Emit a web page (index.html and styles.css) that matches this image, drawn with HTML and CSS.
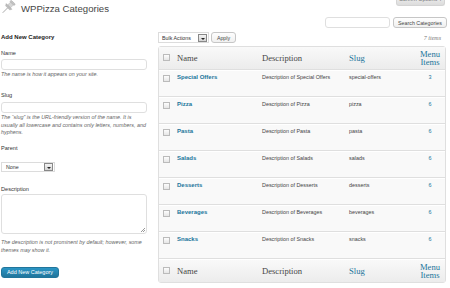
FILE: index.html
```html
<!DOCTYPE html>
<html>
	<head>
		<meta charset="utf-8">
		<title>WPPizza Categories</title>
		<link rel="stylesheet" href="styles.css">
	</head>
	<body>
		<div class="wrap">
			<div class="head">
				<div class="title">
					<svg class="pin" width="16" height="15" viewBox="0 0 16 15">
						<g transform="rotate(45 8 7.5)">
							<rect x="5" y="0" width="6" height="2" rx="1" fill="#c4c4c4" stroke="#aaa" stroke-width="0.5"/>
							<rect x="6" y="2" width="4" height="4" fill="#d6d6d6" stroke="#b0b0b0" stroke-width="0.5"/>
							<path d="M4 6h8l-1.2 2h-5.6z" fill="#bdbdbd" stroke="#a5a5a5" stroke-width="0.5"/>
							<line x1="8" y1="8" x2="8" y2="15" stroke="#9a9a9a" stroke-width="0.8"/>
						</g>
					</svg>
					<h2>WPPizza Categories</h2>
				</div>
				<a class="screen-opt">Screen Options ▾</a>
			</div>

			<div class="search-box">
				<input type="text" class="search-input">
				<button class="btn">Search Categories</button>
			</div>

			<div class="cols">
				<div class="col-left">
					<h3>Add New Category</h3>

					<div class="field f-name">
						<label>Name</label>
						<input type="text" class="txt">
						<p class="help">The name is how it appears on your site.</p>
					</div>

					<div class="field f-slug">
						<label>Slug</label>
						<input type="text" class="txt">
						<p class="help">The “slug” is the URL-friendly version of the name. It is usually all lowercase and contains only letters, numbers, and hyphens.</p>
					</div>

					<div class="field f-parent">
						<label>Parent</label>
						<div class="select parent-sel"><span>None</span><i class="arrow"></i></div>
					</div>

					<div class="field f-desc">
						<label>Description</label>
						<div class="textarea"><i class="grip"></i></div>
						<p class="help">The description is not prominent by default; however, some themes may show it.</p>
					</div>

					<button class="btn-primary">Add New Category</button>
				</div>

				<div class="col-right">
					<div class="tablenav">
						<div class="select bulk"><span>Bulk Actions</span><i class="arrow"></i></div>
						<button class="btn">Apply</button>
						<span class="num">7 items</span>
					</div>

					<table class="list">
						<colgroup>
							<col class="c-cb"><col class="c-name"><col class="c-desc"><col class="c-slug"><col class="c-count">
						</colgroup>
						<thead>
							<tr>
								<th><input type="checkbox" class="cb"></th>
								<th class="h-dark">Name</th>
								<th class="h-dark">Description</th>
								<th class="h-link">Slug</th>
								<th class="h-link num-col">Menu Items</th>
							</tr>
						</thead>
						<tbody>
							<tr><td><input type="checkbox" class="cb"></td><td class="name">Special Offers</td><td>Description of Special Offers</td><td>special-offers</td><td class="count">3</td></tr>
							<tr><td><input type="checkbox" class="cb"></td><td class="name">Pizza</td><td>Description of Pizza</td><td>pizza</td><td class="count">6</td></tr>
							<tr><td><input type="checkbox" class="cb"></td><td class="name">Pasta</td><td>Description of Pasta</td><td>pasta</td><td class="count">6</td></tr>
							<tr><td><input type="checkbox" class="cb"></td><td class="name">Salads</td><td>Description of Salads</td><td>salads</td><td class="count">6</td></tr>
							<tr><td><input type="checkbox" class="cb"></td><td class="name">Desserts</td><td>Description of Desserts</td><td>desserts</td><td class="count">6</td></tr>
							<tr><td><input type="checkbox" class="cb"></td><td class="name">Beverages</td><td>Description of Beverages</td><td>beverages</td><td class="count">6</td></tr>
							<tr><td><input type="checkbox" class="cb"></td><td class="name">Snacks</td><td>Description of Snacks</td><td>snacks</td><td class="count">6</td></tr>
						</tbody>
						<tfoot>
							<tr>
								<th><input type="checkbox" class="cb"></th>
								<th class="h-dark">Name</th>
								<th class="h-dark">Description</th>
								<th class="h-link">Slug</th>
								<th class="h-link num-col">Menu Items</th>
							</tr>
						</tfoot>
					</table>

					<div class="tablenav bottom">
						<div class="select bulk"><span>Bulk Actions</span><i class="arrow"></i></div>
						<button class="btn">Apply</button>
					</div>
				</div>
			</div>
		</div>
	</body>
</html>
```

FILE: styles.css
```css
* {
	margin: 0;
	padding: 0;
	box-sizing: border-box;
}

body {
	background: #fff;
	font-family: "Liberation Sans", Arial, sans-serif;
	font-size: 5.5px;
	color: #333;
	overflow: hidden;
}

.wrap {
	padding: 0 4px 0 0;
}

/* title bar */
.head {
	display: flex;
	justify-content: space-between;
	align-items: flex-start;
	height: 17px;
}

.title {
	display: flex;
	align-items: center;
	height: 17px;
}

.pin {
	display: block;
	margin: -2px 5px 0 0;
}

.title h2 {
	font-weight: normal;
	font-size: 9.6px;
	color: #464646;
	line-height: 17px;
	margin-top: -1px;
}

.screen-opt {
	display: block;
	width: 49px;
	height: 10px;
	margin: -4px 1px 0 0;
	line-height: 7px;
	text-align: center;
	font-size: 5.5px;
	color: #6f6f6f;
	background: linear-gradient(#f1f1f1, #dcdcdc);
	border: 1px solid #d4d4d4;
	border-top: 0;
	border-radius: 0 0 3px 3px;
}

/* search */
.search-box {
	display: flex;
	justify-content: flex-end;
	gap: 3px;
	height: 11px;
	margin-right: -1px;
}

.search-input {
	width: 65px;
	height: 11px;
	border: 1px solid #dfdfdf;
	border-radius: 3px;
	background: #fff;
}

.btn {
	height: 11px;
	padding: 0 3px;
	font-family: "Liberation Sans", Arial, sans-serif;
	font-size: 5.3px;
	color: #464646;
	background: linear-gradient(#fefefe, #f0f0f0);
	border: 1px solid #c6c6c6;
	border-radius: 3px;
}

.search-box .btn {
	width: 54px;
}

/* columns */
.cols {
	display: flex;
	gap: 11px;
}

.col-left {
	width: 147px;
	padding-left: 1px;
}

.col-right {
	width: 288px;
}

.col-left h3 {
	font-size: 6px;
	line-height: 8px;
	margin-top: 5px;
	color: #222;
}

.field label {
	display: block;
	font-size: 5.6px;
	line-height: 7px;
	color: #333;
}

.txt {
	display: block;
	width: 146px;
	height: 11px;
	border: 1px solid #dfdfdf;
	border-radius: 3px;
	background: #fff;
}

.help {
	font-style: italic;
	font-size: 5.4px;
	color: #666;
	line-height: 7px;
	margin-top: 1px;
}

.f-name {
	margin-top: 9px;
}

.f-name .txt {
	margin-top: 2px;
}

.f-slug {
	margin-top: 14px;
}

.f-slug .txt {
	margin-top: 3px;
}

.f-slug .help {
	line-height: 7.5px;
}

.f-parent {
	margin-top: 8px;
}

.select {
	display: flex;
	align-items: center;
	justify-content: space-between;
	height: 11px;
	padding: 0 1px 0 4px;
	background: #fff;
	border: 1px solid #dcdcdc;
	font-size: 5.3px;
	color: #333;
}

.select .arrow {
	display: block;
	width: 9px;
	height: 8px;
	border: 1px solid #888;
	background: linear-gradient(#f4f4f4, #d4d4d4);
	position: relative;
}

.select .arrow::after {
	content: "";
	position: absolute;
	left: 2px;
	top: 3px;
	border-left: 2px solid transparent;
	border-right: 2px solid transparent;
	border-top: 2px solid #222;
}

.parent-sel {
	width: 54px;
	margin-top: 10px;
	height: 10px;
}

.f-desc {
	margin-top: 14px;
}

.textarea {
	position: relative;
	width: 146px;
	height: 40px;
	margin-top: 1px;
	border: 1px solid #dfdfdf;
	border-radius: 3px;
	background: #fff;
}

.grip {
	position: absolute;
	right: 1px;
	bottom: 1px;
	width: 4px;
	height: 4px;
	background: linear-gradient(135deg, transparent 45%, #999 45%, #999 55%, transparent 55%, transparent 75%, #999 75%, #999 85%, transparent 85%);
}

.f-desc .help {
	margin-top: 4px;
	line-height: 8px;
}

.btn-primary {
	display: block;
	margin-top: 13px;
	width: 58px;
	height: 11px;
	font-family: "Liberation Sans", Arial, sans-serif;
	font-size: 5.5px;
	color: #fff;
	background: linear-gradient(#2a95c5, #21759b);
	border: 1px solid #21759b;
	border-radius: 3px;
}

/* list table */
.tablenav {
	display: flex;
	align-items: center;
	gap: 2px;
	height: 11px;
	margin-top: 4px;
}

.bulk {
	width: 51px;
	padding-left: 3px;
}

.tablenav .btn {
	width: 25px;
}

.num {
	margin-left: auto;
	margin-right: 5px;
	font-family: "Liberation Serif", Georgia, serif;
	font-style: italic;
	font-size: 6px;
	color: #777;
}

.list {
	margin-top: 3px;
	width: 288px;
	table-layout: fixed;
	border-collapse: separate;
	border-spacing: 0;
	border: 1px solid #dfdfdf;
	border-radius: 3px;
	background: #f9f9f9;
}

.c-cb { width: 15px; }
.c-name { width: 85px; }
.c-desc { width: 87px; }
.c-slug { width: 69px; }
.c-count { width: 30px; }

.list th {
	height: 23px;
	padding: 0 3px;
	text-align: left;
	font-family: "Liberation Serif", Georgia, serif;
	font-weight: normal;
	font-size: 8.6px;
	line-height: 8px;
	vertical-align: middle;
	background: linear-gradient(#f9f9f9, #ececec);
}

.list thead th {
	border-bottom: 1px solid #dfdfdf;
}

.list tfoot th {
	height: 23px;
	border-top: 1px solid #fff;
}

.h-dark {
	color: #464646;
}

.h-link {
	color: #21759b;
}

.list th.num-col {
	text-align: center;
}

.list td {
	height: 27px;
	padding: 3px 3px 0;
	vertical-align: top;
	line-height: 7px;
	font-size: 5.4px;
	color: #444;
	border-top: 1px solid #fff;
	border-bottom: 1px solid #dfdfdf;
	white-space: nowrap;
	overflow: hidden;
}

.list td.name {
	font-weight: bold;
	font-size: 6px;
	color: #21759b;
}

.list td.count {
	text-align: center;
	color: #21759b;
}

.cb {
	appearance: none;
	display: block;
	width: 7px;
	height: 7px;
	margin: 1px 0 0 1px;
	border: 1px solid #bbb;
	background: linear-gradient(#fdfdfd, #e6e6e6);
}

.list th .cb {
	margin-top: -1px;
}

.tablenav.bottom {
	margin-top: 5px;
}
```
